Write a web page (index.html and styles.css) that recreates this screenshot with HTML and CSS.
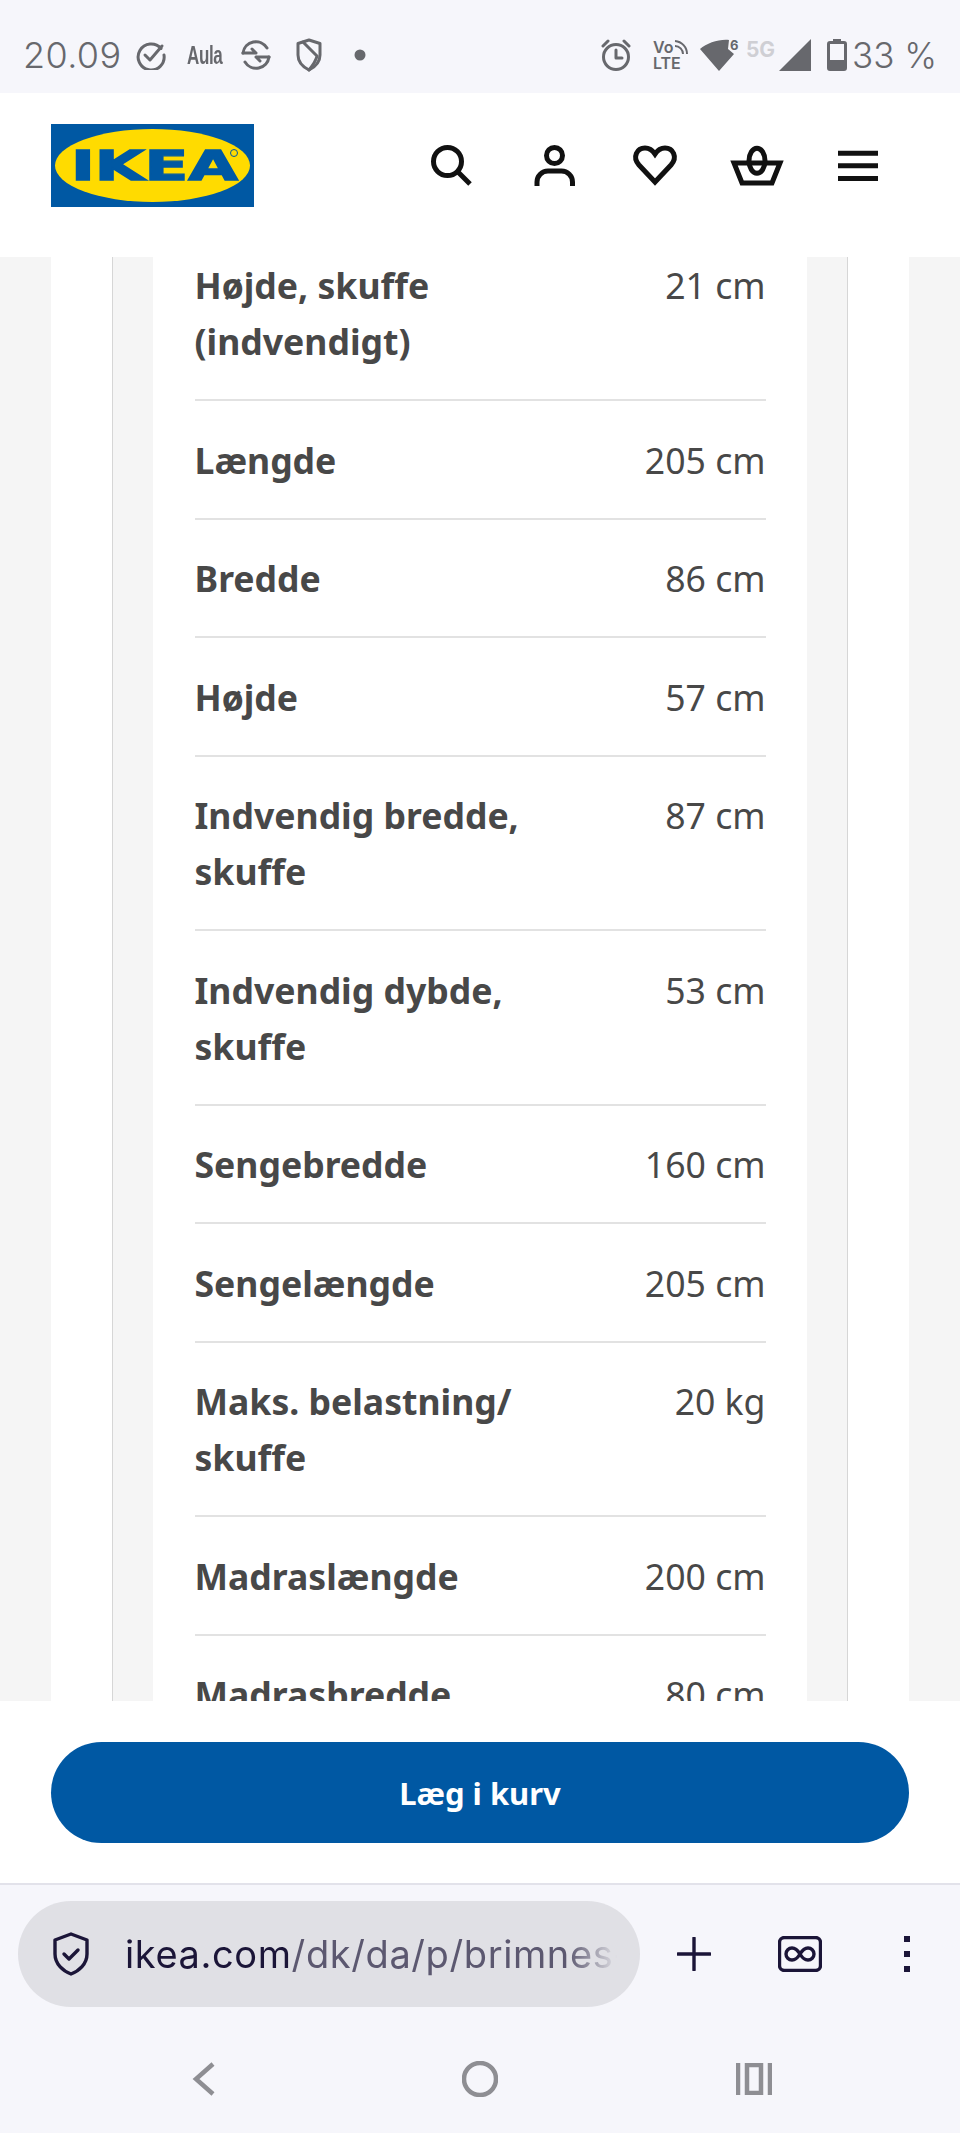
FILE: index.html
```html
<!DOCTYPE html>
<html lang="da">
<head>
<meta charset="utf-8">
<title>IKEA BRIMNES</title>
<link rel="stylesheet" href="styles.css">
</head>
<body>
<div class="status">
  <span class="time">20.09</span>
  <svg class="si w30" viewBox="0 0 30 30"><path d="M25 8.500A13 13 0 1 0 28 15" class="st"/><path d="M9 15l5 5L26 6" class="st"/></svg>
  <span class="aula"><span class="aula-in">Aula</span></span>
  <svg class="si w30 m-sync" viewBox="0 0 30 30"><path d="M2 13A13 13 0 0 1 26 8M28 17A13 13 0 0 1 4 22" class="st"/><path d="M2 13h13M11 9l4 4M28 17H15M19 21l-4-4" class="st"/></svg>
  <svg class="si w28 m-shield" viewBox="0 0 28 34"><path d="M14 2L25 5.500V17C25 24 20 29 14 32C8 29 3 24 3 17V5.500Z" class="st"/><path d="M8 4L22 18C21 23 18 27 14 32" class="st"/></svg>
  <svg class="si dot" viewBox="0 0 12 12"><circle cx="6" cy="6" r="5.500" fill="#67686d"/></svg>
  <div class="status-right">
    <svg class="si alarm" viewBox="0 0 32 32"><circle cx="16" cy="18" r="12.500" class="st"/><path d="M16 11v8h6M3 7l5-5M29 7l-5-5" class="st"/></svg>
    <div class="volte"><span>Vo<svg class="vo" viewBox="0 0 14 14"><path d="M1 6a8 8 0 0 1 8 8M1 1a13 13 0 0 1 12 13" fill="none" stroke="#67686d" stroke-width="2"/></svg></span><span>LTE</span></div>
    <svg class="si wifi" viewBox="0 0 38 34"><path d="M1 11C8 5 20 1 30 2L29 11L35 16L20 33Z" fill="#67686d"/><text x="31" y="12" class="six">6</text></svg>
    <span class="fiveg">5G</span>
    <svg class="si signal" viewBox="0 0 32 32"><path d="M0 32L32 0V32Z" fill="#67686d"/></svg>
    <svg class="si batt" viewBox="0 0 20 32"><path d="M6 0h8v2h3a3 3 0 0 1 3 3v24a3 3 0 0 1-3 3H3a3 3 0 0 1-3-3V5a3 3 0 0 1 3-3h3z" fill="#67686d"/><rect x="3" y="5" width="14" height="16" fill="#f6f6fb"/></svg>
    <span class="pct">33 %</span>
  </div>
</div>

<header class="top">
  <svg class="logo" viewBox="0 0 203 83">
    <rect width="203" height="83" fill="#0058a3"/>
    <ellipse cx="101.500" cy="41.500" rx="97.500" ry="36.500" fill="#ffdb00"/>
    <text x="20" y="55.500" class="logo-text" textLength="167" lengthAdjust="spacingAndGlyphs">IKEA</text>
    <circle cx="183" cy="29" r="3.500" fill="none" stroke="#0058a3" stroke-width="1"/>
  </svg>
  <nav class="top-icons">
    <svg viewBox="0 0 60 60"><circle cx="25.500" cy="26.500" r="14" class="hi"/><path d="M36 37L48 49" class="hi"/></svg>
    <svg viewBox="0 0 60 60"><circle cx="30.500" cy="20.500" r="8" class="hi"/><path d="M13 51V47A11 11 0 0 1 24 36H37.500A11 11 0 0 1 48.500 47V51" class="hi"/></svg>
    <svg viewBox="0 0 60 60"><path d="M30 47L14 30C7 22 12 13 20 13C25 13 28 16 30 19C32 16 35 13 40 13C48 13 53 22 46 30Z" class="hi"/></svg>
    <svg viewBox="0 0 60 60"><path d="M7 28H53L45 48H15Z" class="hi"/><ellipse cx="30" cy="25.700" rx="8" ry="12.500" class="hi"/></svg>
    <svg viewBox="0 0 60 60"><path d="M10 18.300H50M10 30.800H50M10 43.500H50" class="hi"/></svg>
  </nav>
</header>

<main class="scroller">
  <div class="card">
    <div class="frame">
      <div class="specs">
        <div class="spec"><span class="name">Højde, skuffe (indvendigt)</span><span class="val">21 cm</span></div>
        <div class="spec"><span class="name">Længde</span><span class="val">205 cm</span></div>
        <div class="spec"><span class="name">Bredde</span><span class="val">86 cm</span></div>
        <div class="spec"><span class="name">Højde</span><span class="val">57 cm</span></div>
        <div class="spec"><span class="name">Indvendig bredde, skuffe</span><span class="val">87 cm</span></div>
        <div class="spec"><span class="name">Indvendig dybde, skuffe</span><span class="val">53 cm</span></div>
        <div class="spec"><span class="name">Sengebredde</span><span class="val">160 cm</span></div>
        <div class="spec"><span class="name">Sengelængde</span><span class="val">205 cm</span></div>
        <div class="spec"><span class="name">Maks. belastning/ skuffe</span><span class="val">20 kg</span></div>
        <div class="spec"><span class="name">Madraslængde</span><span class="val">200 cm</span></div>
        <div class="spec"><span class="name">Madrasbredde</span><span class="val">80 cm</span></div>
      </div>
    </div>
  </div>
</main>

<div class="buy"><button class="buy-btn">Læg i kurv</button></div>

<div class="browser">
  <div class="url-row">
    <div class="pill">
      <svg class="lock" viewBox="0 0 40 44"><path d="M20 2L36 8V22C36 32 28 39 20 42C12 39 4 32 4 22V8Z" class="ui"/><path d="M13 22l5 5 9-9" class="ui"/></svg>
      <span class="url"><b>ikea.com</b>/dk/da/p/brimnes-</span>
    </div>
    <svg class="plus" viewBox="0 0 34 34"><path d="M17 1V33M1 17H33" class="ui"/></svg>
    <svg class="inf" viewBox="0 0 44 36"><rect x="1.500" y="1.500" width="41" height="33" rx="5" class="ui"/><path d="M22 18C19 13 16 12 14 12A6 6 0 0 0 14 24C16 24 19 23 22 18C25 13 28 12 30 12A6 6 0 0 1 30 24C28 24 25 23 22 18Z" class="ui"/></svg>
    <div class="dots"><i></i><i></i><i></i></div>
  </div>
  <div class="nav-row">
    <svg class="back" viewBox="0 0 24 34"><path d="M21 2L4 17L21 32" class="nv"/></svg>
    <svg class="home" viewBox="0 0 36 36"><circle cx="18" cy="18" r="16" class="nv"/></svg>
    <svg class="recent" viewBox="0 0 36 32"><path d="M2 0V32M34 0V32" class="nv"/><rect x="11" y="2" width="14" height="28" class="nv"/></svg>
  </div>
</div>
</body>
</html>
```
FILE: styles.css
```css
* { box-sizing: border-box; }
html, body { margin: 0; padding: 0; }
body {
  width: 960px;
  height: 2133px;
  display: flex;
  flex-direction: column;
  overflow: hidden;
  background: #fff;
  font-family: "Noto Sans", "Open Sans", sans-serif;
}
svg { display: block; flex: none; }

/* status bar */
.status {
  height: 93px;
  flex: none;
  background: #f6f6fb;
  display: flex;
  align-items: center;
  padding: 17px 24px 0 23px;
  color: #67686d;
  font-family: Inter, "Noto Sans", sans-serif;
}
.time { font-size: 36px; font-weight: 300; letter-spacing: 0.4px; width: 97px; }
.st { fill: none; stroke: #67686d; stroke-width: 3; stroke-linecap: round; stroke-linejoin: round; }
.w30 { width: 30px; height: 30px; margin-left: 16px; }
.aula { width: 34px; margin-left: 21px; white-space: nowrap; }
.aula-in { display: inline-block; font-family: "Liberation Sans", sans-serif; font-weight: 700; font-size: 25px; letter-spacing: -0.5px; transform: scaleX(0.68); transform-origin: left center; }
.m-sync { margin-left: 20px; }
.w28 { width: 28px; height: 34px; }
.m-shield { margin-left: 24px; }
.dot { width: 12px; height: 12px; margin-left: 31px; }
.status-right { margin-left: auto; display: flex; align-items: center; }
.alarm { width: 32px; height: 32px; }
.volte { width: 34px; margin-left: 21px; font-size: 16px; font-weight: 600; line-height: 16px; display: flex; flex-direction: column; }
.volte span { display: flex; align-items: center; white-space: nowrap; }
.vo { width: 14px; height: 14px; margin-left: 1px; }
.wifi { width: 38px; height: 34px; margin-left: 12px; overflow: visible; }
.six { font-size: 13px; font-weight: 700; fill: #67686d; font-family: Inter, sans-serif; }
.fiveg { width: 30px; margin-left: 9px; color: #cfcfd4; font-size: 21px; font-weight: 700; position: relative; top: -6px; }
.signal { width: 32px; height: 32px; margin-left: 3px; }
.batt { width: 20px; height: 32px; margin-left: 16px; }
.pct { font-size: 35px; font-weight: 300; margin-left: 5px; margin-right: -1px; white-space: nowrap; }

/* site header */
.top {
  height: 164px;
  flex: none;
  background: #fff;
  display: flex;
  align-items: center;
  padding: 0 72px 19px 51px;
}
.logo { width: 203px; height: 83px; }
.logo-text { font-family: "DejaVu Sans", sans-serif; font-weight: 700; font-size: 40px; fill: #0058a3; stroke: #0058a3; stroke-width: 1.400px; }
.top-icons { margin-left: auto; margin-top: -1px; display: flex; gap: 41.500px; }
.top-icons svg { width: 60px; height: 60px; }
.hi { fill: none; stroke: #111; stroke-width: 5; }

/* scrolled content */
.scroller { flex: 1; min-height: 0; overflow: hidden; background: #f5f5f5; padding: 0 51px; }
.card { background: #fff; padding: 0 61px; }
.frame { background: #f5f5f5; border-left: 1px solid #d6d6d6; border-right: 1px solid #d6d6d6; padding: 0 40px; }
.specs { background: #fff; padding: 0 41.500px; }
.spec {
  display: flex;
  justify-content: space-between;
  padding: 30.250px 0;
  border-bottom: 2px solid #e2e2e2;
  font-size: 35.600px;
  line-height: 56px;
  color: #484848;
}
.spec:first-child { padding-top: 0; }
.name { font-weight: 700; width: 350px; }
.val { font-weight: 400; white-space: nowrap; }

/* buy bar */
.buy { height: 184px; flex: none; background: #fff; padding: 41px 51px 0; border-bottom: 2px solid #e2e2ea; }
.buy-btn {
  display: block;
  width: 100%;
  height: 101px;
  border: 0;
  border-radius: 51px;
  background: #0058a3;
  color: #fff;
  font: 700 31px "Noto Sans", sans-serif;
}

/* browser chrome */
.browser { height: 248px; flex: none; background: #f6f6fb; padding-top: 16px; }
.url-row { display: flex; align-items: center; padding-left: 18px; height: 106px; }
.pill {
  width: 622px;
  height: 106px;
  flex: none;
  border-radius: 53px;
  background: #e0e0e5;
  display: flex;
  align-items: center;
  padding-left: 33px;
}
.lock { width: 40px; height: 44px; }
.ui { fill: none; stroke: #1b1538; stroke-width: 3.400; stroke-linecap: round; stroke-linejoin: round; }
.url {
  margin-left: 34px;
  width: 492px;
  overflow: hidden;
  white-space: nowrap;
  font-family: Inter, "Noto Sans", sans-serif;
  font-size: 38px;
  letter-spacing: 0.6px;
  color: #5c5870;
  -webkit-mask-image: linear-gradient(to right, #000 90%, transparent 100%);
  mask-image: linear-gradient(to right, #000 90%, transparent 100%);
}
.url b { font-weight: 400; color: #1b1538; }
.plus { width: 34px; height: 34px; margin-left: 37px; }
.inf { width: 44px; height: 36px; margin-left: 67px; }
.dots { margin-left: 82px; display: flex; flex-direction: column; gap: 9px; }
.dots i { display: block; width: 6px; height: 6px; background: #1b1538; }
.nav-row { display: flex; align-items: center; height: 70px; margin-top: 37px; padding-left: 192px; }
.nv { fill: none; stroke: #8e8e93; stroke-width: 4.500; }
.back { width: 24px; height: 34px; }
.home { width: 36px; height: 36px; margin-left: 246px; }
.recent { width: 36px; height: 32px; margin-left: 238px; }
```
